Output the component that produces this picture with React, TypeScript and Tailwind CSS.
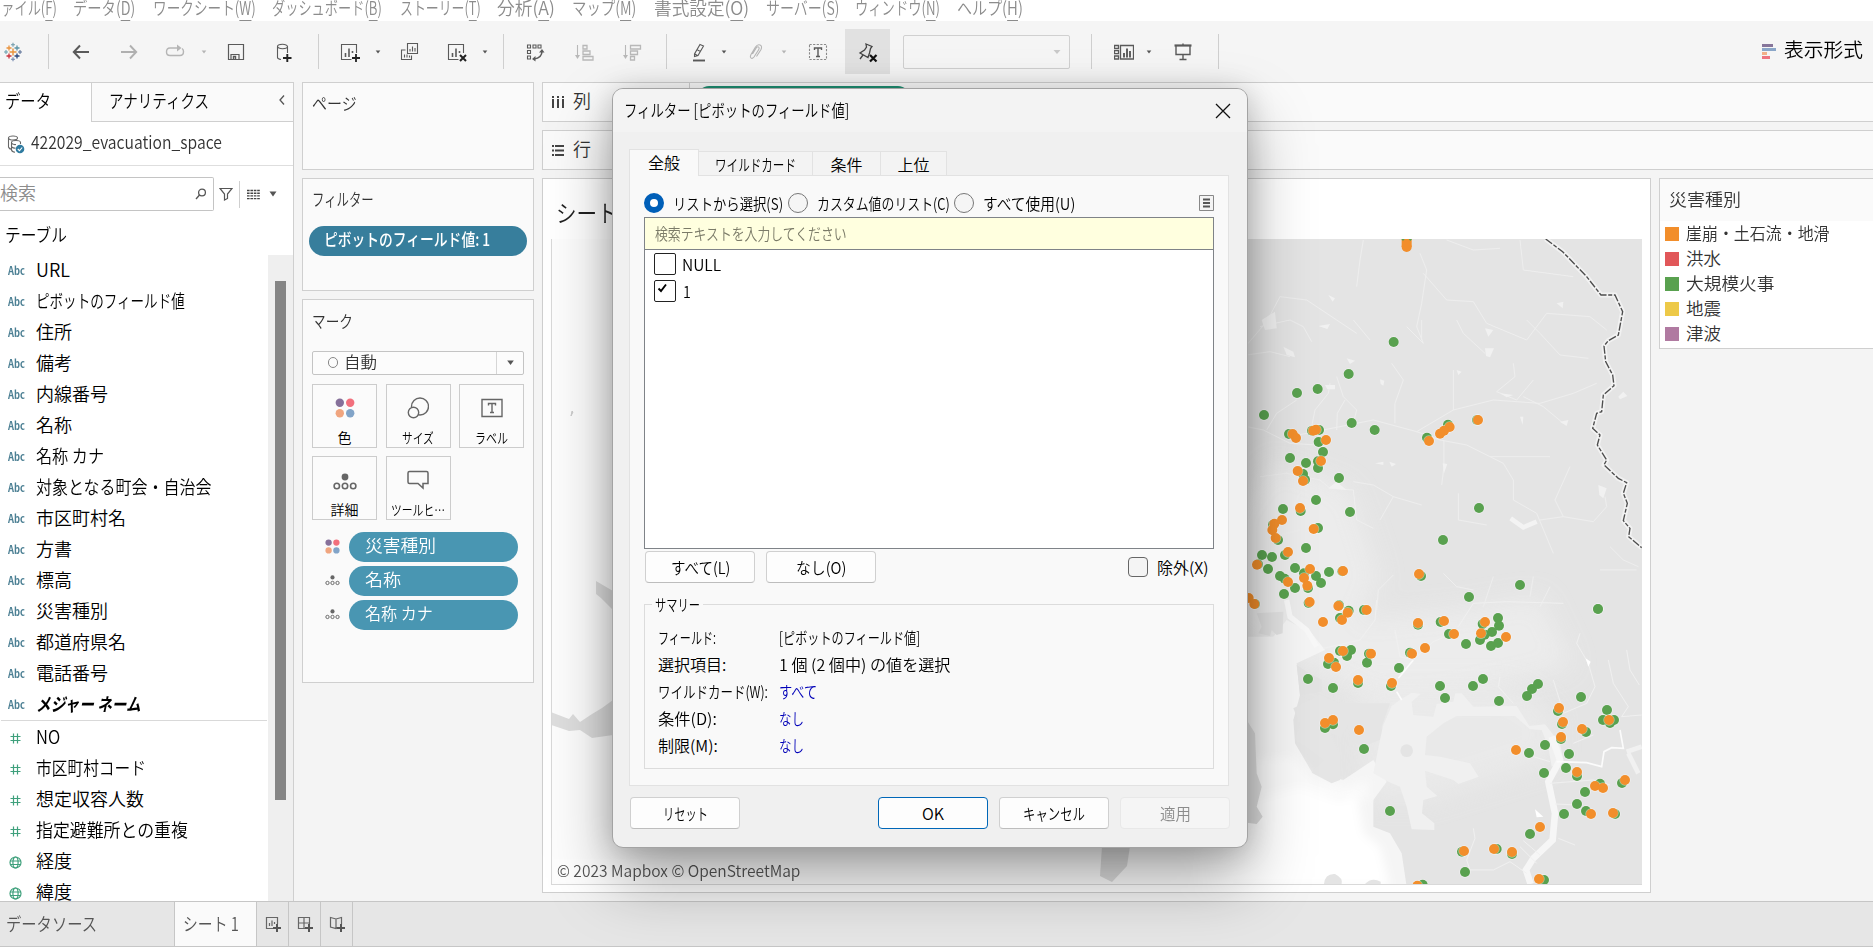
import { useLayoutEffect, useRef, useState, type ReactNode } from "react";

function Fit({ w, className = "", children }: { w: number; className?: string; children: ReactNode }) {
  const ref = useRef<HTMLSpanElement>(null);
  const [scale, setScale] = useState(1);
  useLayoutEffect(() => {
    if (ref.current && ref.current.offsetWidth > 0) setScale(w / ref.current.offsetWidth);
  }, [w]);
  return (
    <span className={`inline-flex shrink-0 overflow-visible whitespace-pre ${className}`} style={{ width: w }}>
      <span ref={ref} className="inline-block shrink-0 origin-left" style={{ transform: `scaleX(${scale})` }}>
        {children}
      </span>
    </span>
  );
}

function Svg({ className = "", children, color = "#5a5a5a" }: { className?: string; children: ReactNode; color?: string }) {
  return (
    <svg viewBox="0 0 20 20" className={`h-5 w-5 shrink-0 ${className}`} fill="none" stroke={color} strokeWidth="1.1">
      {children}
    </svg>
  );
}

function Caret({ className = "", light = false }: { className?: string; light?: boolean }) {
  return (
    <svg viewBox="0 0 8 8" className={`h-2 w-2 shrink-0 ${className}`}>
      <path d="M1.7 2.5H6.3L4 5.5Z" fill={light ? "#b5b5b5" : "#555"} />
    </svg>
  );
}

const Sep = ({ className }: { className: string }) => <div className={`h-[35px] w-px shrink-0 bg-[#cfcfcf] ${className}`} />;

const menus: [string, string, number, string][] = [
  ["ファイル", "F", 69, "-ml-3"],
  ["データ", "D", 62, "ml-4"],
  ["ワークシート", "W", 103, "ml-[18px]"],
  ["ダッシュボード", "B", 110, "ml-4"],
  ["ストーリー", "T", 81, "ml-[18px]"],
  ["分析", "A", 58, "ml-4"],
  ["マップ", "M", 64, "ml-[17px]"],
  ["書式設定", "O", 95, "ml-[18px]"],
  ["サーバー", "S", 73, "ml-[17px]"],
  ["ウィンドウ", "N", 85, "ml-4"],
  ["ヘルプ", "H", 66, "ml-[17px]"],
];

function MenuBar() {
  return (
    <div className="flex h-[21px] shrink-0 items-center bg-white text-[18px] leading-[18px] text-[#8c8c8c]">
      {menus.map(([t, k, w, m]) => (
        <Fit key={k} w={w} className={`-mt-[7px] ${m}`}>
          {t}(<span className="border-b border-[#8c8c8c]">{k}</span>)
        </Fit>
      ))}
    </div>
  );
}

function Plus({ x, y, c = "#5a5a5a" }: { x: number; y: number; c?: string }) {
  return <path d={`M${x - 2} ${y}h4M${x} ${y - 2}v4`} stroke={c} strokeWidth="1.1" />;
}

function ChartBox() {
  return (
    <>
      <path d="M11.5 17.5H1.5V2.5H16.5V11" />
      <path d="M5.5 15V11M9 15V6.5M12.5 11V9" strokeWidth="1.6" />
    </>
  );
}

function Toolbar() {
  return (
    <div className="flex h-[61px] shrink-0 items-center bg-[#f5f5f5]">
      <Svg className="ml-[3px]">
        <path d="M10 6.5v7M6.5 10h7" stroke="#e8923c" strokeWidth="1.4" />
        <Plus x={10} y={2.8} c="#6f9bab" />
        <Plus x={10} y={17.2} c="#7186ad" />
        <Plus x={3} y={10} c="#6aa0ae" />
        <Plus x={17} y={10} c="#5a6f96" />
        <path d="M3.5 6h5M6 3.5v5" stroke="#e8923c" strokeWidth="1.3" />
        <path d="M11.5 6h5M14 3.5v5" stroke="#5b93a5" strokeWidth="1.3" />
        <path d="M3.5 14h5M6 11.5v5" stroke="#c9313c" strokeWidth="1.3" />
        <path d="M11.5 14h5M14 11.5v5" stroke="#28457d" strokeWidth="1.3" />
      </Svg>
      <Sep className="ml-[25px]" />
      <Svg className="ml-[22px]"><path d="M18 10H3M9 3.5L2.8 10L9 16.5" strokeWidth="2" /></Svg>
      <Svg className="ml-7" color="#b0b0b0"><path d="M2 10H17M11 3.5L17.2 10L11 16.5" strokeWidth="1.9" /></Svg>
      <Svg className="ml-[26px]" color="#b5b5b5">
        <path d="M17 6.5Q18.5 7.5 18.5 9.5Q18.5 13.5 15 13.5H5Q1.5 13.5 1.5 10Q1.5 6 5 6H13" strokeWidth="1.4" />
        <path d="M12 2.5L16.5 6L12 9.5Z" fill="#b5b5b5" stroke="none" />
      </Svg>
      <Caret className="ml-[15px]" light />
      <Svg className="ml-[18px]"><path d="M2.5 2.5H17.5V17.5H2.5ZM5 17.5V12.5H13V17.5" strokeWidth="1.2" /><path d="M7.5 17V14.5h2V17" strokeWidth="1.4" /></Svg>
      <Svg className="ml-7">
        <ellipse cx="8.5" cy="4.5" rx="5" ry="2.2" />
        <path d="M3.5 4.5V15.5Q3.5 17 7 17.5M13.500 4.5V11" />
        <path d="M9 16h8.500M13.300 12v8" stroke="#222" strokeWidth="1.900" />
      </Svg>
      <Sep className="ml-6" />
      <Svg className="ml-[21px] overflow-visible"><ChartBox /><path d="M12 16h8M16 12v8" stroke="#222" strokeWidth="1.8" /></Svg>
      <Caret className="ml-[14px]" />
      <Svg className="ml-[17px]">
        <path d="M8.500 1.500H18.500V11.500H8.500Z" />
        <path d="M6.500 8H2.500V17.500H12.500V13.500M11 9.500V7M13.500 9.500V4.500M16 9.500V6M5.500 15.500V12.500M8 15.500V12.500M10.500 15.500V13.500" />
      </Svg>
      <Svg className="ml-7 overflow-visible"><ChartBox /><path d="M13 13L19 19M19 13L13 19" stroke="#222" strokeWidth="2" /></Svg>
      <Caret className="ml-[14px]" />
      <Sep className="ml-[14px]" />
      <Svg className="ml-[21px]">
        <path d="M2.500 3h3v3h-3ZM8 3h3v3h-3ZM13 3h3v3h-3ZM2.500 8.500h3v3h-3ZM2.500 14h3v3h-3Z" />
        <path d="M17 9Q17 16 9 17" strokeWidth="1.500" />
        <path d="M14 10.500L17 7L19.500 10.500ZM10.500 14L7 17L10.500 19.500Z" fill="#5a5a5a" stroke="none" />
      </Svg>
      <Svg className="ml-[29px]" color="#b8b8b8">
        <path d="M3.500 3V15" /><path d="M1 13H6L3.500 17Z" fill="#b8b8b8" stroke="none" />
        <path d="M9 3.500h4v3.500H9ZM9 9h7v3.500H9ZM9 14.500h10V18H9Z" strokeWidth="1.3" />
      </Svg>
      <Svg className="ml-7" color="#b8b8b8">
        <path d="M3.500 3V15" /><path d="M1 13H6L3.500 17Z" fill="#b8b8b8" stroke="none" />
        <path d="M8.500 3.500h10V7H8.500ZM8.500 9h7v3.500H8.500ZM8.500 14.500h4V18H8.500Z" strokeWidth="1.3" />
      </Svg>
      <Sep className="ml-6" />
      <Svg className="ml-[22px]"><path d="M11 2.500L14.500 4L9 13.500L5.500 14.500V12Z M8.500 8L11.500 9.500M5.500 11.800L8.800 13.800" /><path d="M4 18.500H16" strokeWidth="1.900" /></Svg>
      <Caret className="ml-[11px]" />
      <Svg className="ml-[18px]" color="#b5b5b5"><path d="M6.500 12L10.500 5.500Q12 4 13 5.500Q13.500 6.500 12.500 8L8 15Q6 17.500 4.500 15.500Q4 14.500 5 12.500L9.500 5Q11.500 2 14 3Q16.500 4 15 7.500L10.500 14.500" /></Svg>
      <Caret className="ml-[14px]" light />
      <Svg className="ml-5"><path d="M1.500 2.500H18.500V17.500H1.500Z" strokeDasharray="2.200 1.400" stroke="#8a8a8a" /><path d="M6.500 8V6H13.500V8M10 6V14.500M8 14.500H12" strokeWidth="1.400" /></Svg>
      <div className="ml-[17px] flex h-[45px] w-[45px] shrink-0 items-center justify-center bg-[#e1e1e1]">
        <Svg className="overflow-visible"><path d="M8 2L14 4.500L12.500 6.500L11.500 11L10 15.500L2 11L6.500 8L8.500 5Z M5 13L2 17" strokeWidth="1.300" stroke="#444" /><path d="M12 13L18.500 19.500M18.500 13L12 19.500" stroke="#111" strokeWidth="2.200" /></Svg>
      </div>
      <div className="ml-[13px] flex h-[34px] w-[167px] shrink-0 items-center justify-end rounded-[2px] border border-[#d0d0d0] pr-2">
        <svg viewBox="0 0 8 8" className="h-2 w-2"><path d="M0.500 2H7.500L4 6Z" fill="#c9c9c9" /></svg>
      </div>
      <Sep className="ml-[21px]" />
      <Svg className="ml-[22px]"><path d="M0.500 3.500h4v3h-4ZM0.500 8.700h4v3h-4ZM0.500 14h4v3h-4ZM6.500 3.500h13v13.500h-13Z" strokeWidth="1.300" /><path d="M10 15.500V11M13 15.500V6.500M16 15.500V9" strokeWidth="1.900" /></Svg>
      <Caret className="ml-[11px]" />
      <Svg className="ml-5"><path d="M1.500 3.500H18.500" strokeWidth="2.200" /><path d="M3 4V12.500H17V4M10 12.500V17.500M6.500 17.500H13.500M10 1.500V3" strokeWidth="1.400" /></Svg>
      <Sep className="ml-[25px]" />
      <div className="ml-auto flex items-center gap-2 pr-[10px]">
        <svg viewBox="0 0 14 15" className="h-[15px] w-[14px]">
          <path d="M0 0h11v3H0z" fill="#86759a" /><path d="M0 4h14v3H0z" fill="#8aa6c8" /><path d="M0 8h5v3H0z" fill="#f2b088" /><path d="M0 12h8v3H0z" fill="#ee7480" />
        </svg>
        <Fit w={79} className="-mt-1 text-[19px] text-black">表示形式</Fit>
      </div>
    </div>
  );
}

const dims: [string, number][] = [
  ["URL", 34], ["ピボットのフィールド値", 149], ["住所", 36], ["備考", 36], ["内線番号", 72], ["名称", 36], ["名称 カナ", 68],
  ["対象となる町会・自治会", 175], ["市区町村名", 90], ["方書", 36], ["標高", 36], ["災害種別", 72], ["都道府県名", 90], ["電話番号", 72],
];
const measures: [string, number, string][] = [
  ["NO", 24, "#"], ["市区町村コード", 110, "#"], ["想定収容人数", 108, "#"], ["指定避難所との重複", 152, "#"], ["経度", 36, "g"], ["緯度", 36, "g"],
];

const Abc = () => <span className="flex w-7 shrink-0 items-center"><Fit w={17} className="text-[11px] font-bold text-[#4b7f93]">Abc</Fit></span>;

function DataPane() {
  return (
    <div className="flex w-[294px] shrink-0 flex-col border-r border-[#cfcfcf] bg-white text-black">
      <div className="flex h-10 shrink-0 border-t border-[#cfcfcf] text-[18px]">
        <div className="flex w-[91px] items-center pb-1 pl-[5px]"><Fit w={46}>データ</Fit></div>
        <div className="flex flex-1 items-center justify-between border-b border-l border-[#cfcfcf] bg-[#fafafa] pb-1 pl-[17px] pr-2">
          <Fit w={100}>アナリティクス</Fit>
          <svg viewBox="0 0 6 10" className="h-[10px] w-[6px]" fill="none" stroke="#555" strokeWidth="1.300"><path d="M5 0.500L1 5L5 9.500" /></svg>
        </div>
      </div>
      <div className="flex h-11 shrink-0 items-center border-b border-[#dedede] pl-[7px] text-[18px] text-[#333]">
        <svg viewBox="0 0 18 20" className="h-5 w-[18px]" fill="none" stroke="#666" strokeWidth="1.100">
          <ellipse cx="6" cy="4" rx="4.500" ry="2" /><path d="M1.500 4V13Q2 15 5 15.500M4.500 8.500Q4.500 6.500 9 6.500Q13.500 6.500 13.500 8.500V10M4.500 8.500V16Q5 18 8 18.200M4.500 9Q6 11 9 10.500M5 13Q6.500 14.500 8.500 14" />
          <circle cx="13" cy="15" r="4.300" fill="#2f7ba0" stroke="none" /><path d="M10.800 15L12.500 16.700L15.200 13.500" stroke="#fff" />
        </svg>
        <Fit w={191} className="-mt-1 ml-[6px]">422029_evacuation_space</Fit>
      </div>
      <div className="mt-[11px] flex h-[34px] shrink-0 items-center">
        <div className="flex h-[34px] w-[214px] items-center justify-between rounded-r-[2px] border border-l-0 border-[#c4c4c4] pr-[6px] text-[18px] text-[#8c8c8c]">
          <Fit w={36} className="-mt-[3px]">検索</Fit>
          <svg viewBox="0 0 12 12" className="h-3 w-3" fill="none" stroke="#555" strokeWidth="1.300"><circle cx="7" cy="4.500" r="3.400" /><path d="M4.500 7L1 11" /></svg>
        </div>
        <svg viewBox="0 0 14 14" className="ml-[5px] h-[14px] w-[14px]" fill="none" stroke="#555" strokeWidth="1.200"><path d="M1 1.500H13L8.500 7V11.500L5.500 13V7Z" /></svg>
        <div className="ml-[6px] h-[27px] w-px bg-[#cfcfcf]" />
        <svg viewBox="0 0 13 11" className="ml-[7px] h-[11px] w-[13px]" stroke="#444" strokeWidth="1.400"><path d="M0 1.500H13M0 4.200H13M0 6.900H13M0 9.600H13" strokeDasharray="2.600 0.800" /></svg>
        <svg viewBox="0 0 8 6" className="ml-[9px] h-[6px] w-[8px]"><path d="M0.500 0.500H7.500L4 5.500Z" fill="#555" /></svg>
      </div>
      <div className="flex h-[44px] shrink-0 items-center pl-[5px] pt-0.5 text-[18px]"><Fit w={62}>テーブル</Fit></div>
      <div className="flex min-h-0 flex-1 overflow-hidden">
        <div className="flex w-[268px] shrink-0 flex-col text-[18px]">
          {dims.map(([t, w]) => (
            <div key={t} className="flex h-[31px] shrink-0 items-center pl-2"><Abc /><Fit w={w} className="-mt-[3px]">{t}</Fit></div>
          ))}
          <div className="flex h-[31px] shrink-0 items-center pl-2"><Abc /><Fit w={105} className="-mt-[3px] font-bold italic">メジャー ネーム</Fit></div>
          <div className="mx-px mb-[1.500px] h-px shrink-0 bg-[#d9d9d9]" />
          {measures.map(([t, w, k]) => (
            <div key={t} className="flex h-[31px] shrink-0 items-center pl-[9px]">
              <span className="w-[27px]">
                <svg viewBox="0 0 13 13" className="h-[13px] w-[13px]" fill="none" stroke="#3fa07c" strokeWidth="1.200">
                  {k === "#" ? <path d="M4.500 1.500V11.500M8.500 1.500V11.500M1.500 4.500H11.500M1.500 8.500H11.500" /> : (
                    <><circle cx="6.500" cy="6.500" r="5.500" /><ellipse cx="6.500" cy="6.500" rx="2.600" ry="5.500" /><path d="M1 5H12M1 8.500H12" /></>
                  )}
                </svg>
              </span>
              <Fit w={w} className="-mt-[3px]">{t}</Fit>
            </div>
          ))}
        </div>
        <div className="flex flex-1 bg-[#efefef]"><div className="ml-[7px] mt-[26px] h-[519px] w-[11px] bg-[#858585]" /></div>
      </div>
    </div>
  );
}

function ColorDots({ className }: { className: string }) {
  return (
    <svg viewBox="0 0 20 20" className={className}>
      <circle cx="4.800" cy="4.800" r="4.200" fill="#86709a" /><circle cx="15.200" cy="4.800" r="4.200" fill="#f2707d" />
      <circle cx="4.800" cy="15.200" r="4.200" fill="#f0a57f" /><circle cx="15.200" cy="15.200" r="4.200" fill="#82a4c8" />
    </svg>
  );
}
function DetailDots({ className }: { className: string }) {
  return (
    <svg viewBox="0 0 24 18" className={className} fill="none" stroke="#666" strokeWidth="1.600">
      <circle cx="12" cy="4" r="3.400" fill="#666" stroke="none" />
      <circle cx="3.800" cy="13" r="2.700" /><circle cx="12" cy="13" r="2.700" /><circle cx="20.200" cy="13" r="2.700" />
    </svg>
  );
}
function MarkButton({ label, w, children }: { label: string; w: number; children: ReactNode }) {
  return (
    <div className="flex h-[64px] w-[65px] flex-col items-center border border-[#cccccc] bg-[#fbfbfb]">
      <div className="flex h-[46px] shrink-0 items-center justify-center">{children}</div>
      <Fit w={w} className="-mt-[1px] text-[14px] leading-[14px] text-black">{label}</Fit>
    </div>
  );
}

function Shelves() {
  return (
    <div className="flex w-[232px] shrink-0 flex-col text-[17px] text-[#333]">
      <div className="h-[88px] border border-[#cfcfcf] bg-[#fafafa] pl-[9px] pt-[7px]"><Fit w={45}>ページ</Fit></div>
      <div className="mt-2 h-[113px] border border-[#cfcfcf] bg-[#fafafa] pl-[6px] pt-[7px]">
        <Fit w={62} className="ml-[3px]">フィルター</Fit>
        <div className="mt-[14px] flex h-[30px] w-[218px] items-center rounded-full bg-[#377e9c] pb-1 pl-[15px] font-medium text-white"><Fit w={166}>ピボットのフィールド値: 1</Fit></div>
      </div>
      <div className="mt-2 h-[384px] border border-[#cfcfcf] bg-[#fafafa] pl-[9px] pt-2">
        <Fit w={41}>マーク</Fit>
        <div className="mt-[17px] flex h-6 w-[212px] items-center rounded-[2px] border border-[#c4c4c4] bg-[#fcfcfc] pl-[15px]">
          <span className="h-[11px] w-[10px] rounded-full border border-[#888]" />
          <Fit w={33} className="-mt-[3px] ml-[6px] text-[16px]">自動</Fit>
          <span className="ml-auto flex h-full w-[27px] items-center justify-center border-l border-[#d6d6d6]">
            <svg viewBox="0 0 8 6" className="h-[5px] w-[7px]"><path d="M0 0.500H8L4 6Z" fill="#555" /></svg>
          </span>
        </div>
        <div className="mt-[9px] grid w-[212px] grid-cols-[65px_65px_65px] gap-x-[8.500px] gap-y-2">
          <MarkButton label="色" w={14}><ColorDots className="h-5 w-5" /></MarkButton>
          <MarkButton label="サイズ" w={32}>
            <svg viewBox="0 0 22 22" className="h-[22px] w-[22px]" fill="none" stroke="#666" strokeWidth="1.400"><circle cx="13" cy="9.500" r="8.500" /><circle cx="6.500" cy="15.500" r="5.200" fill="#fbfbfb" /></svg>
          </MarkButton>
          <MarkButton label="ラベル" w={33}>
            <svg viewBox="0 0 22 20" className="h-[20px] w-[22px]" fill="none" stroke="#666" strokeWidth="1.400"><path d="M1 1.500H21V18.500H1Z M7.500 7.500V5.500H14.500V7.500M11 5.500V14.500M9 14.500H13" /></svg>
          </MarkButton>
          <MarkButton label="詳細" w={28}><DetailDots className="mt-1 h-[18px] w-6" /></MarkButton>
          <MarkButton label="ツールヒ…" w={54}>
            <svg viewBox="0 0 22 20" className="h-5 w-[22px]" fill="none" stroke="#666" strokeWidth="1.500"><path d="M2.500 1.500H19.500Q21 1.500 21 3V13.500H16V18L11 13.500H2.500Q1 13.500 1 12V3Q1 1.500 2.500 1.500Z" /></svg>
          </MarkButton>
        </div>
        <div className="mt-3 flex flex-col gap-1 text-white">
          {([["災害種別", 71], ["名称", 36], ["名称 カナ", 68]] as [string, number][]).map(([t, w], i) => (
            <div key={t} className="flex items-center pl-[13px]">
              {i === 0 ? <ColorDots className="h-[15px] w-[15px]" /> : <DetailDots className="h-[11px] w-[15px]" />}
              <div className="ml-[9px] flex h-[30px] w-[169px] items-center rounded-full bg-[#4996b2] pb-1 pl-4"><Fit w={w}>{t}</Fit></div>
            </div>
          ))}
        </div>
      </div>
    </div>
  );
}

const G = "#59a14f";
const O = "#f28e2b";
const greenN = [[461,66],[326,162],[233,207],[171,219],[72,285],[335,309],[404,330],[147,342],[216,332],[237,330],[236,366],[249,396],[150,414],[198,429],[234,424],[234,444],[189,462],[195,479],[297,474],[228,540],[129,567],[182,573],[330,576],[234,624],[99,614],[114,660],[198,684],[66,705],[96,711],[135,705],[84,747],[54,733],[165,744],[120,768],[134,776],[192,760],[228,768],[243,789],[267,756],[165,804],[204,804],[132,822],[307,754],[45,852],[206,849],[624,314],[561,353],[711,300],[717,564],[609,660],[543,768],[840,795],[687,831],[1074,867]];
const orangeN = [[158,342],[168,354],[220,332],[228,329],[258,360],[243,423],[173,453],[189,483],[180,564],[126,600],[103,611],[97,630],[107,654],[221,627],[144,696],[51,734],[210,747],[192,774],[202,797],[144,786],[309,753],[26,834],[43,852],[209,846],[629,321],[612,332],[600,341],[567,363],[714,300],[537,762]];
const greenS = [[297,16],[326,32],[372,30],[300,54],[534,74],[602,66],[627,102],[728,72],[774,54],[777,77],[756,96],[734,104],[720,120],[678,132],[753,138],[774,129],[300,153],[333,150],[321,168],[264,192],[282,188],[387,161],[381,188],[204,237],[279,264],[354,249],[453,258],[477,204],[510,158],[600,258],[615,294],[699,258],[729,237],[777,303],[861,288],[876,267],[894,252],[1023,291],[954,333],[966,372],[963,417],[1038,396],[1089,360],[1101,330],[1122,360],[1110,369],[255,384],[279,373],[372,447],[450,633],[915,435],[867,459],[987,462],[978,504],[912,519],[1011,528],[1035,576],[1080,551],[1146,549],[1011,612],[1038,633],[972,642],[1125,642],[870,702],[666,755],[770,747],[816,762],[675,816],[912,840],[548,854],[1074,27]];
const orangeS = [[295,18],[323,38],[306,60],[249,66],[380,30],[534,69],[612,63],[642,102],[735,66],[723,100],[798,111],[555,144],[516,161],[309,153],[267,174],[288,201],[393,161],[354,240],[456,249],[957,324],[969,366],[963,411],[1026,387],[1107,360],[255,369],[279,360],[357,390],[828,450],[1011,516],[1065,558],[1089,564],[1155,540],[1053,642],[1119,639],[900,681],[672,753],[762,747],[816,756],[897,837],[532,857]];

const Dots = ({ pts, fill }: { pts: number[][]; fill: string }) => (
  <>
    {pts.map(([x, y], i) => <circle key={i} cx={x} cy={y} r="17" fill="#fff" opacity="0.450" />)}
    {pts.map(([x, y], i) => <circle key={`d${i}`} cx={x} cy={y} r="15" fill={fill} />)}
  </>
);

function MapView() {
  return (
    <svg viewBox="552 239 1090 645" className="h-[645px] w-[1090px]">
      <defs>
        <filter id="soft" x="-40%" y="-40%" width="180%" height="180%"><feGaussianBlur stdDeviation="38" /></filter>
        <filter id="mid" x="-20%" y="-20%" width="140%" height="140%"><feGaussianBlur stdDeviation="14" /></filter>
      </defs>
      <rect x="551" y="239" width="1092" height="646" fill="#e4e4e4" />
      <rect x="551" y="239" width="685" height="646" fill="#fdfdfd" />
      <path d="M551 712L569 719L573 714L580 722L592 714L602 708L613 700V735L592 738L580 730L569 731L551 725Z" fill="#dedede" />
      <path d="M596 581L613 591V610L601 598L596 594Z" fill="#dedede" />
      <path d="M572 411L573 412L571 416Z" stroke="#ccc" fill="#ccc" />
      <g transform="translate(1240 600) scale(0.33333)">
        <path d="M-20 -260L100 -420L330 -330L420 -60L350 60L660 30L900 -10L1000 200L600 290L420 300L-20 100Z" fill="#eeeeee" opacity="0.800" filter="url(#soft)" />
        <path d="M360 260L820 260L940 340L940 480L560 600L380 600Z" fill="#ececec" opacity="0.700" filter="url(#soft)" />
        <path d="M20 110L100 110L140 60L215 100L255 150L170 190L180 285L160 360L165 430L215 515L310 540L400 480L440 545L400 600L400 680L450 700L485 760L500 860H-20V110Z" fill="#f5f5f5" />
        <path d="M20 480L160 470L220 540L320 560L385 540L385 600L20 600Z" fill="#fafafa" filter="url(#mid)" />
        <path d="M-60 620L180 560L300 600L350 580L370 700L420 740L450 860H-130L-130 760Z" fill="#fff" filter="url(#mid)" />
        <path d="M160 325L240 285L300 310L450 310L425 380L430 415L370 440L330 420L325 370L305 410L270 400L300 460L300 540L275 550L215 518L250 480L190 435L165 420L180 375Z" fill="#e5e5e5" />
        <path d="M170 195L200 215L245 240V275L180 285Z" fill="#e3e3e3" />
        <path d="M50 40L130 35L128 100L110 105L95 90L90 108L55 100L65 80Z" fill="#e2e2e2" />
        <path d="M420 420L430 375L455 318L480 300L515 278L542 282L515 305L520 345L580 350L590 312L640 305L646 280L665 280L700 320L830 318L868 378L915 373L960 430L970 480L935 500L925 440L905 390L870 388L825 348H650L610 370L560 410L555 465L600 470L690 490L716 530L655 552L640 540L555 512L560 560L592 588L550 600L546 640L583 670V690L515 688L500 620L480 560L445 545L400 520Z" fill="#f0f0f0" />
        <path d="M20 360L45 400L50 520L65 560L50 620L68 650L50 672L20 668Z" fill="#dedede" />
        <circle cx="500" cy="452" r="19" fill="#e4e4e4" />
        <path d="M252 852Q255 820 285 822Q310 835 305 852ZM375 852Q395 830 422 845V852Z" fill="#e4e4e4" />
        <path d="M935 410L960 480L925 545L945 640L938 720L880 775L858 810L872 852" fill="none" stroke="#f6f6f6" strokeWidth="20" />
        <path d="M950 485L1040 488L1085 500L1092 455L1115 443L1150 445L1140 390M470 275L485 300M520 180L475 235" fill="none" stroke="#fbfbfb" strokeWidth="5" />
        <path d="M140 0L150 50L200 90L230 140" stroke="#f8f8f8" strokeWidth="16" fill="none" />
        <g fill="none" stroke="#f0f0f0" strokeWidth="3">
          <path d="M410 0L405 60L360 120L250 145M465 90L480 170L520 180L580 125L640 100M655 80L700 10L800 5L970 10M970 340L1040 310L1065 260L1045 190L1010 130L1020 100M1105 180L1120 250L1165 320L1145 350L1205 345M1160 150L1170 210L1198 255M930 550L1060 540L1110 555M945 612L1010 615M700 685L705 715L680 780L690 810L760 810L810 785L860 820M955 715L1005 735M880 470L930 485M780 230L775 260L820 310M1000 430L1060 405M940 240L965 320" />
          <path d="M840 740L890 790M850 722L900 765" />
        </g>
        <path d="M1160 455L1205 440M1165 460L1195 520" stroke="#f1f1f1" strokeWidth="14" />
        <path d="M1037 175L1052 185L1045 200ZM885 628L910 650L890 652Z" fill="#fff" />
      </g>
      <path d="M1102 846H1130L1127 866L1112 882L1100 876Z" fill="#dddddd" />
      <g transform="translate(1240 320) scale(0.33333)">
        <g fill="none" stroke="#eeeeee" strokeWidth="3">
          <path d="M20 320L70 330L150 370L230 375M150 350L400 300L530 335L640 270L760 240L900 250L1000 220L1070 190" />
          <path d="M20 105L90 95L150 110M80 330L110 280L170 240M215 320L225 270L265 220L270 190M290 170L310 230L350 270L340 310M290 330L292 280L315 240M455 130L490 180L465 250L465 310M640 150L640 270M820 130L825 170L770 215L830 240L880 180M545 0L545 60M340 0L390 60M650 0L670 40L735 100M860 0L900 40L960 105L1045 115" />
          <path d="M530 335L600 360L680 375L750 410L790 430L820 480L820 540L890 580L940 700M612 360L612 440L605 495M655 520V600L740 615M750 410L930 410M850 230L910 260L970 310M60 470L140 460L240 480L270 505L340 510L350 600L400 625M340 485L400 495L460 530L545 555M460 530L420 600M900 600L970 590L1060 605L1100 560L1095 530M970 590L945 540L990 440M60 20L150 0L190 20L215 65M180 520L160 560M80 610L110 625L100 650L180 630M410 870L415 810L460 765M610 760L650 800L700 810M730 860L760 770M870 830L880 770M900 860L930 800M1110 680L1150 720L1195 740M1080 750H1190" />
        </g>
        <path d="M130 80L160 95L165 112L140 105ZM735 85L762 85L750 112L738 108ZM235 18L270 12L262 27ZM420 178L433 182L430 197L422 192ZM265 505L290 485L320 510ZM1075 495L1100 505L1090 535L1078 525ZM608 430L622 432L612 460ZM960 305L985 300L980 318ZM840 290L850 290L848 315ZM1135 230L1150 215L1162 228L1140 238ZM405 430L430 425V435ZM448 425L468 432L455 440ZM780 220L820 225L800 232ZM650 150L665 155L655 165ZM320 115L345 122L330 132ZM255 195L285 195V208H262Z" fill="#f1f1f1" />
        <path d="M812 595L850 622L890 605" fill="none" stroke="#f3f3f3" strokeWidth="14" />
        <path d="M917 -243L968 -205L1011 -160L1040 -130L1083 -75H1125L1148 -25L1135 45L1105 62L1092 78L1097 125L1118 165L1122 197L1090 225L1085 275L1070 280L1058 325L1080 345L1072 375L1100 420L1092 435L1135 475L1160 488L1150 520L1162 550L1150 602L1170 625L1166 650L1205 683" fill="none" stroke="#f2f2f2" strokeWidth="15" strokeLinejoin="round" />
        <path d="M917 -243L968 -205L1011 -160L1040 -130L1083 -75H1125L1148 -25L1135 45L1105 62L1092 78L1097 125L1118 165L1122 197L1090 225L1085 275L1070 280L1058 325L1080 345L1072 375L1100 420L1092 435L1135 475L1160 488L1150 520L1162 550L1150 602L1170 625L1166 650L1205 683" fill="none" stroke="#4d4d4d" strokeWidth="4" strokeDasharray="24 5 12 5" />
        <g fill="none" stroke="#eeeeee" strokeWidth="3">
          <path d="M20 75L80 5L120 -70L200 -60L290 0M290 0L350 40M370 -240L360 -180L350 -100M540 -200L560 -150L545 -50L530 20L550 70L500 20M550 -140L620 -60L700 -55L740 10L860 60L920 -20L1050 -10L1100 30M840 -240L850 -150L1000 -130M620 -240L700 -210L780 -215" />
        </g>
        <path d="M65 0L105 -25L110 25L75 30ZM265 -75L285 -65L278 -55ZM950 -50L970 -55L968 -35ZM735 25L760 30L745 50Z" fill="#f1f1f1" />
        <Dots pts={greenN} fill={G} />
        <Dots pts={orangeN} fill={O} />
        <circle cx="500" cy="-219" r="15" fill={O} /><path d="M485 -243H515V-219H485Z" fill={O} /><path d="M484 -243h10l-5 6ZM516 -243h-10l5 6Z" fill={G} />
      </g>
      <g transform="translate(1240 600) scale(0.33333)">
        <Dots pts={greenS} fill={G} />
        <Dots pts={orangeS} fill={O} />
      </g>
    </svg>
  );
}

const legend: [string, number, string][] = [
  ["崖崩・土石流・地滑", 144, "bg-[#f28e2b]"], ["洪水", 35, "bg-[#e15759]"], ["大規模火事", 89, "bg-[#59a14f]"], ["地震", 35, "bg-[#edc948]"], ["津波", 35, "bg-[#b07aa1]"],
];

function Main() {
  return (
    <div className="flex min-w-0 flex-1 flex-col text-[#333]">
      <div className="flex h-10 shrink-0 border border-r-0 border-[#cfcfcf] bg-[#fafafa] text-[18px]">
        <div className="flex w-[147px] shrink-0 items-center border-r border-[#cfcfcf] pl-[9px]">
          <svg viewBox="0 0 12 12" className="h-3 w-3" fill="#444"><path d="M0 3h2v9H0zM5 3h2v9H5zM10 3h2v9h-2zM0 0h2v2H0zM5 0h2v2H5zM10 0h2v2h-2z" /></svg>
          <Fit w={18} className="-mt-1 ml-[9px]">列</Fit>
        </div>
        <div className="ml-[7px] mt-[3px] h-[30px] w-[213px] rounded-[12px] bg-[#1f8f72]" />
      </div>
      <div className="mt-2 flex h-10 shrink-0 items-center border border-r-0 border-[#cfcfcf] bg-[#fafafa] pl-[9px] text-[18px]">
        <svg viewBox="0 0 12 11" className="h-[11px] w-3" fill="#444"><path d="M0 0h2v2H0zM0 4.500h2v2H0zM0 9h2v2H0zM3 0h9v2H3zM3 4.500h9v2H3zM3 9h9v2H3z" /></svg>
        <Fit w={18} className="-mt-1 ml-[9px]">行</Fit>
      </div>
      <div className="mt-2 flex gap-2">
        <div className="flex h-[715px] w-[1109px] shrink-0 flex-col border border-[#cfcfcf] bg-white">
          <div className="flex h-[60px] shrink-0 items-center pl-[13px] pt-[6px] text-[24px] text-[#222]"><Fit w={78}>シート 1</Fit></div>
          <div className="relative ml-2 h-[646px] w-[1091px] border-b border-l border-[#d9d9d9]">
            <MapView />
            <div className="absolute bottom-[2px] left-0.5 flex h-[23px] items-center bg-white/50 pb-0.5 pl-[3px] text-[16px] text-[#555]"><Fit w={243}>© 2023 Mapbox © OpenStreetMap</Fit></div>
          </div>
        </div>
        <div className="h-[171px] flex-1 border border-r-0 border-[#cfcfcf] bg-white text-[17px]">
          <div className="flex h-[42px] items-center bg-[#fafafa] pb-0.5 pl-[9px]"><Fit w={72}>災害種別</Fit></div>
          {legend.map(([t, w, c]) => (
            <div key={t} className="flex h-[25px] items-center pl-[5px]"><span className={`h-[14px] w-[14px] ${c}`} /><Fit w={w} className="ml-[7px] text-[17.500px]">{t}</Fit></div>
          ))}
        </div>
      </div>
    </div>
  );
}

function BottomTabs() {
  return (
    <div className="flex h-[46px] shrink-0 border-y border-[#c6c6c6] bg-[#e6e6e6] text-[18px] text-[#555]">
      <div className="flex w-[175px] items-center border-r border-[#c6c6c6] pb-0.5 pl-[6px]"><Fit w={91}>データソース</Fit></div>
      <div className="flex w-[82px] items-center border-r border-[#c6c6c6] bg-[#fafafa] pb-0.5 pl-2"><Fit w={56}>シート 1</Fit></div>
      {["M11 13.500H1.500V2.500H12.500V9M4.500 11V8M7 11V5.500M9.500 9V7", "M10 13.500H1.500V2.500H12.500V9.500M7 2.500V13.500M1.500 8H12.500", "M9 12.500L7 13.500L1.500 12V2.500L7 4L12.500 2.500V9.500M7 4V13.500"].map((d) => (
        <div key={d} className="flex w-8 items-center justify-center border-r border-[#c6c6c6]">
          <svg viewBox="0 0 16 18" className="h-[18px] w-4" fill="none" stroke="#666" strokeWidth="1.200"><path d={d} /><path d="M8 13H16M12 9V17" strokeWidth="2" stroke="#555" /></svg>
        </div>
      ))}
    </div>
  );
}

function Btn({ children, w, className = "" }: { children: ReactNode; w: number; className?: string }) {
  return (
    <div className={`flex h-8 w-[110px] shrink-0 items-center justify-center rounded-[4px] border ${className}`}><Fit w={w}>{children}</Fit></div>
  );
}
const plain = "border-[#d0d0d0] border-b-[#bdbdbd] bg-[#fdfdfd]";

const summary: [string, number, string, number, boolean][] = [
  ["フィールド:", 58, "[ピボットのフィールド値]", 141, false],
  ["選択項目:", 68, "1 個 (2 個中) の値を選択", 171, false],
  ["ワイルドカード(W):", 110, "すべて", 38, true],
  ["条件(D):", 59, "なし", 25, true],
  ["制限(M):", 60, "なし", 25, true],
];

function Dialog() {
  return (
    <div className="absolute left-[612px] top-[88px] flex h-[760px] w-[636px] flex-col overflow-hidden rounded-[11px] border-[1.500px] border-[#a3a3a3] bg-[#f0f0f0] text-[16px] leading-[20px] text-black shadow-[0_32px_64px_rgba(0,0,0,0.34),0_2px_28px_rgba(0,0,0,0.18)]">
      <div className="flex h-[43px] shrink-0 items-center justify-between bg-[#f3f3f3] pl-[11px] pr-[16px] text-[17px]">
        <Fit w={225} className="-mt-0.5">フィルター [ピボットのフィールド値]</Fit>
        <svg viewBox="0 0 16 16" className="h-4 w-4" stroke="#111" strokeWidth="1.300"><path d="M1 1L15 15M15 1L1 15" /></svg>
      </div>
      <div className="flex h-[43px] shrink-0 items-end pl-4">
        <div className="z-10 -mb-px flex h-[27px] w-[70px] items-center justify-center border border-b-0 border-[#e2e2e2] bg-[#f9f9f9] pb-0.5"><Fit w={32}>全般</Fit></div>
        {([["ワイルドカード", 81, "w-[114px]"], ["条件", 32, "w-[68px]"], ["上位", 32, "w-[66px]"]] as [string, number, string][]).map(([t, w, c]) => (
          <div key={t} className={`flex h-6 items-center justify-center border border-b-0 border-l-0 border-[#e2e2e2] bg-[#f3f3f3] ${c}`}><Fit w={w}>{t}</Fit></div>
        ))}
      </div>
      <div className="ml-4 flex h-[611px] w-[600px] shrink-0 flex-col border border-[#e2e2e2] bg-[#f9f9f9] px-[14px]">
        <div className="mt-[13px] flex h-7 items-center">
          <span className="h-5 w-5 rounded-full border-[6px] border-[#005fb8] bg-white" />
          <Fit w={110} className="ml-[9px]">リストから選択(S)</Fit>
          <span className="ml-[5px] h-5 w-5 rounded-full border border-[#777] bg-[#f5f5f5]" />
          <Fit w={133} className="ml-[9px]">カスタム値のリスト(C)</Fit>
          <span className="ml-[4px] h-5 w-5 rounded-full border border-[#777] bg-[#f5f5f5]" />
          <Fit w={92} className="ml-[9px]">すべて使用(U)</Fit>
          <svg viewBox="0 0 15 16" className="ml-auto h-4 w-[15px]" fill="#f4f4f4" stroke="#888"><path d="M0.500 0.500H14.500V15.500H0.500Z" /><path d="M4 4.500H11M4 8H11M4 11.500H11" stroke="#555" strokeWidth="1.800" /></svg>
        </div>
        <div className="flex h-[332px] flex-col border border-[#7f8388] bg-white">
          <div className="flex h-8 shrink-0 items-center border-b border-[#7f8388] bg-[#ffffdf] pb-0.5 pl-[10px] text-[#7b7b68]"><Fit w={192}>検索テキストを入力してください</Fit></div>
          <div className="mt-px flex h-[25px] items-center pl-[9px]"><span className="h-[22px] w-[22px] rounded-[2px] border border-[#222]" /><Fit w={39} className="ml-[6px]">NULL</Fit></div>
          <div className="mt-[2px] flex h-[25px] items-center pl-[9px]">
            <span className="h-[22px] w-[22px] rounded-[2px] border border-[#222]"><svg viewBox="0 0 20 20" className="h-5 w-5" fill="none" stroke="#000" strokeWidth="1.900"><path d="M3.500 7.500L6 10L11 3.500" /></svg></span>
            <Fit w={8} className="ml-[7px]">1</Fit>
          </div>
        </div>
        <div className="mt-0.5 flex h-8 items-center">
          <Btn w={59} className={`ml-px ${plain}`}>すべて(L)</Btn>
          <Btn w={50} className={`ml-[11px] ${plain}`}>なし(O)</Btn>
          <span className="ml-auto h-5 w-5 rounded-[4px] border border-[#666] bg-[#f4f4f4]" />
          <Fit w={52} className="ml-[9px] mr-[5px]">除外(X)</Fit>
        </div>
        <fieldset className="mt-[11px] h-[175px] border border-[#dcdcdc] pl-[14px]">
          <legend className="-ml-[7px] px-[3px]"><Fit w={45} className="h-5 align-top">サマリー</Fit></legend>
          <div className="mt-[9px]">
            {summary.map(([a, aw, b, bw, link]) => (
              <div key={a} className="flex h-[27px] items-center"><div className="w-[120px]"><Fit w={aw} className="-ml-px">{a}</Fit></div><Fit w={bw} className={link ? "text-[#0000b8]" : ""}>{b}</Fit></div>
            ))}
          </div>
        </fieldset>
      </div>
      <div className="ml-[17px] mt-[11px] flex w-[600px]">
        <Btn w={45} className={plain}>リセット</Btn>
        <Btn w={22} className="ml-auto border-[#0067b8] bg-[#fdfdfd]">OK</Btn>
        <Btn w={62} className={`ml-[11px] ${plain}`}>キャンセル</Btn>
        <Btn w={31} className="ml-[11px] border-[#e8e8e8] bg-[#f5f5f5] text-[#8c8c8c]">適用</Btn>
      </div>
    </div>
  );
}

export default function App() {
  return (
    <div className="relative flex h-[947px] w-[1873px] flex-col overflow-hidden bg-[#f4f4f4] font-['Noto_Sans_CJK_JP',sans-serif] font-[350]">
      <MenuBar />
      <Toolbar />
      <div className="flex h-[819px] shrink-0">
        <DataPane />
        <div className="ml-2"><Shelves /></div>
        <div className="ml-2 flex min-w-0 flex-1"><Main /></div>
      </div>
      <BottomTabs />
      <Dialog />
    </div>
  );
}
